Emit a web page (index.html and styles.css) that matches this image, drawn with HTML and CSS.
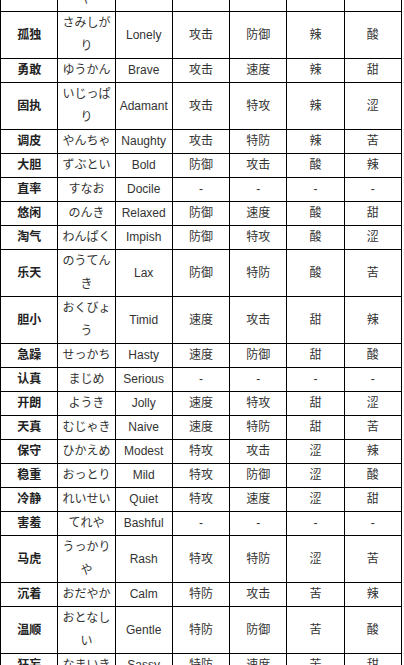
FILE: index.html
```html
<!DOCTYPE html>
<html lang="zh">
<head>
<meta charset="utf-8">
<title>性格表</title>
<link rel="stylesheet" href="styles.css">
</head>
<body>
<table class="natures">
<colgroup><col><col><col><col><col><col><col></colgroup>
<thead>
<tr><th>性格</th><th>日文</th><th>英文</th><th>增加</th><th>减少</th><th>喜欢</th><th>讨厌</th></tr>
</thead>
<tbody>
<tr><th>勤奋</th><td>がんばりや</td><td>Hardy</td><td>-</td><td>-</td><td>-</td><td>-</td></tr>
<tr><th>孤独</th><td>さみしがり</td><td>Lonely</td><td>攻击</td><td>防御</td><td>辣</td><td>酸</td></tr>
<tr><th>勇敢</th><td>ゆうかん</td><td>Brave</td><td>攻击</td><td>速度</td><td>辣</td><td>甜</td></tr>
<tr><th>固执</th><td>いじっぱり</td><td>Adamant</td><td>攻击</td><td>特攻</td><td>辣</td><td>涩</td></tr>
<tr><th>调皮</th><td>やんちゃ</td><td>Naughty</td><td>攻击</td><td>特防</td><td>辣</td><td>苦</td></tr>
<tr><th>大胆</th><td>ずぶとい</td><td>Bold</td><td>防御</td><td>攻击</td><td>酸</td><td>辣</td></tr>
<tr><th>直率</th><td>すなお</td><td>Docile</td><td>-</td><td>-</td><td>-</td><td>-</td></tr>
<tr><th>悠闲</th><td>のんき</td><td>Relaxed</td><td>防御</td><td>速度</td><td>酸</td><td>甜</td></tr>
<tr><th>淘气</th><td>わんぱく</td><td>Impish</td><td>防御</td><td>特攻</td><td>酸</td><td>涩</td></tr>
<tr><th>乐天</th><td>のうてんき</td><td>Lax</td><td>防御</td><td>特防</td><td>酸</td><td>苦</td></tr>
<tr><th>胆小</th><td>おくびょう</td><td>Timid</td><td>速度</td><td>攻击</td><td>甜</td><td>辣</td></tr>
<tr><th>急躁</th><td>せっかち</td><td>Hasty</td><td>速度</td><td>防御</td><td>甜</td><td>酸</td></tr>
<tr><th>认真</th><td>まじめ</td><td>Serious</td><td>-</td><td>-</td><td>-</td><td>-</td></tr>
<tr><th>开朗</th><td>ようき</td><td>Jolly</td><td>速度</td><td>特攻</td><td>甜</td><td>涩</td></tr>
<tr><th>天真</th><td>むじゃき</td><td>Naive</td><td>速度</td><td>特防</td><td>甜</td><td>苦</td></tr>
<tr><th>保守</th><td>ひかえめ</td><td>Modest</td><td>特攻</td><td>攻击</td><td>涩</td><td>辣</td></tr>
<tr><th>稳重</th><td>おっとり</td><td>Mild</td><td>特攻</td><td>防御</td><td>涩</td><td>酸</td></tr>
<tr><th>冷静</th><td>れいせい</td><td>Quiet</td><td>特攻</td><td>速度</td><td>涩</td><td>甜</td></tr>
<tr><th>害羞</th><td>てれや</td><td>Bashful</td><td>-</td><td>-</td><td>-</td><td>-</td></tr>
<tr><th>马虎</th><td>うっかりや</td><td>Rash</td><td>特攻</td><td>特防</td><td>涩</td><td>苦</td></tr>
<tr><th>沉着</th><td>おだやか</td><td>Calm</td><td>特防</td><td>攻击</td><td>苦</td><td>辣</td></tr>
<tr><th>温顺</th><td>おとなしい</td><td>Gentle</td><td>特防</td><td>防御</td><td>苦</td><td>酸</td></tr>
<tr><th>狂妄</th><td>なまいき</td><td>Sassy</td><td>特防</td><td>速度</td><td>苦</td><td>甜</td></tr>
<tr><th>慎重</th><td>しんちょう</td><td>Careful</td><td>特防</td><td>特攻</td><td>苦</td><td>涩</td></tr>
<tr><th>浮躁</th><td>きまぐれ</td><td>Quirky</td><td>-</td><td>-</td><td>-</td><td>-</td></tr>
</tbody>
</table>
<script src="script.js"></script>
</body>
</html>
```
FILE: styles.css
```css
html, body {
  margin: 0;
  padding: 0;
  background: #fff;
}
.natures {
  border-collapse: collapse;
  table-layout: fixed;
  width: 402px;
  font-family: "Liberation Sans", "Noto Sans CJK SC", sans-serif;
  font-size: 12px;
  color: #333;
}
.natures th,
.natures td {
  border: 1px solid #000;
  padding: 0 3px;
  line-height: 23px;
  text-align: center;
  vertical-align: middle;
  font-weight: normal;
}
.natures tbody th {
  font-weight: bold;
  color: #222;
}
```
FILE: script.js
```js
window.scrollTo(0, 60);
```
